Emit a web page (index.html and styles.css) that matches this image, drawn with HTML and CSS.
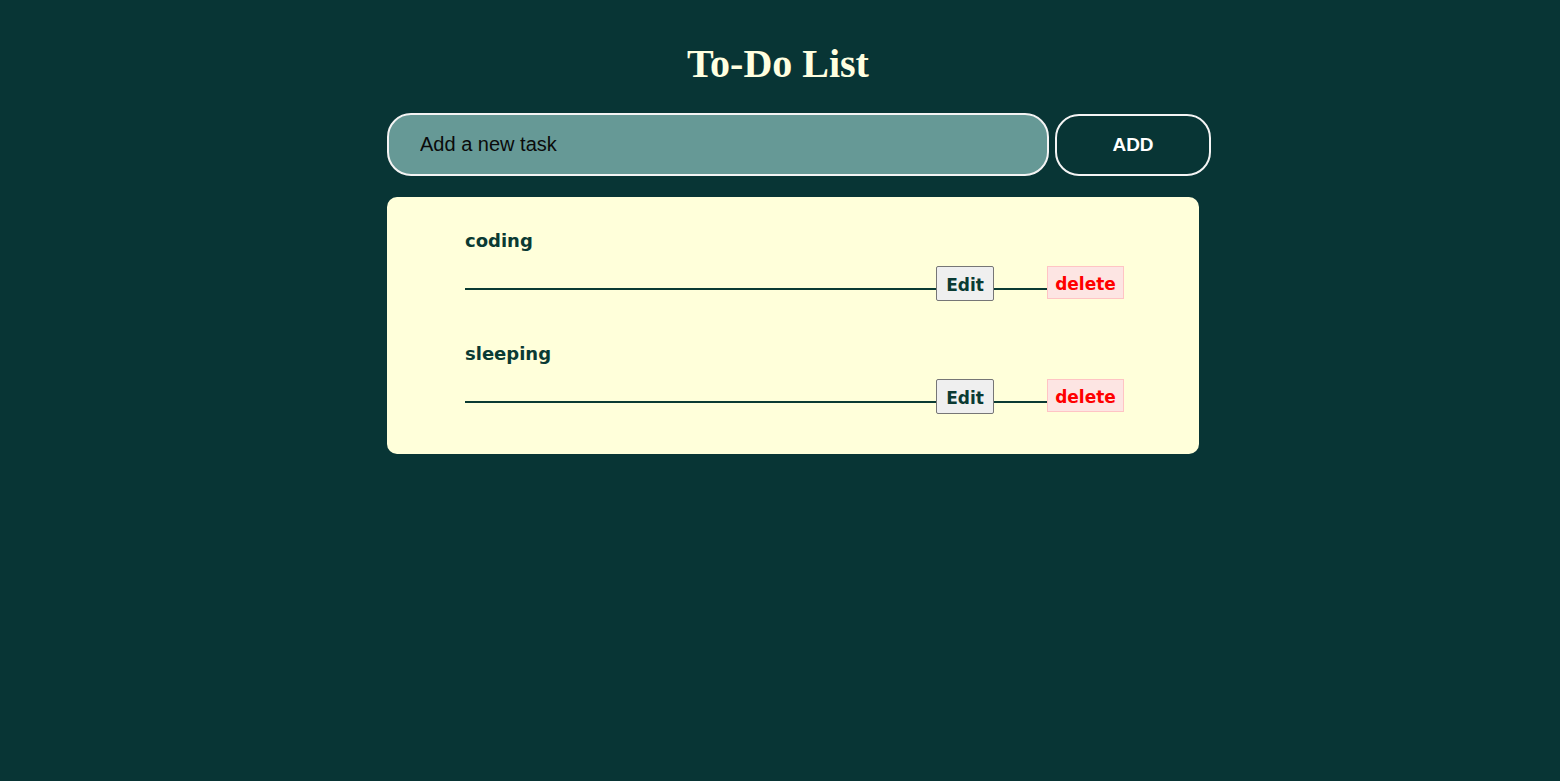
FILE: index.html
```html
<!DOCTYPE html>
<html lang="en">
<head>
<meta charset="utf-8">
<title>To-Do List</title>
<link rel="stylesheet" href="styles.css">
</head>
<body>
<div class="app">
  <h1 class="title">To-Do List</h1>
  <div class="main">
    <div class="entry">
      <input class="task-input" type="text" placeholder="Add a new task">
      <button class="add-btn">ADD</button>
    </div>
    <div class="card">
      <ul class="tasks">
        <li class="task">
          <span class="task-name">coding</span>
          <div class="task-row">
            <span class="rule rule-long"></span>
            <button class="edit-btn">Edit</button>
            <span class="rule rule-short"></span>
            <button class="delete-btn">delete</button>
          </div>
        </li>
        <li class="task">
          <span class="task-name">sleeping</span>
          <div class="task-row">
            <span class="rule rule-long"></span>
            <button class="edit-btn">Edit</button>
            <span class="rule rule-short"></span>
            <button class="delete-btn">delete</button>
          </div>
        </li>
      </ul>
    </div>
  </div>
</div>
</body>
</html>
```

FILE: styles.css
```css
* { box-sizing: border-box; }

html, body {
  margin: 0;
  padding: 0;
  background: #083535;
  height: 100%;
}

.app {
  padding-top: 41px;
}

.title {
  margin: 0 0 0 -4px;
  text-align: center;
  font-family: "Liberation Serif", "Times New Roman", serif;
  font-weight: bold;
  font-size: 40px;
  line-height: 46px;
  color: #ffffe0;
}

.main {
  margin-left: 387px;
  width: 824px;
  margin-top: 26px;
  display: flex;
  flex-direction: column;
  gap: 21px;
}

.entry {
  display: flex;
  align-items: flex-start;
  gap: 6px;
}

.task-input {
  width: 662px;
  height: 63px;
  border: 2px solid #f4f4f4;
  border-radius: 24px;
  background: #669996;
  padding: 0 0 0 31px;
  font-family: "Liberation Sans", Arial, sans-serif;
  font-size: 20px;
  color: #000;
  outline: none;
}

.task-input::placeholder {
  color: #0a0a0a;
  opacity: 1;
}

.add-btn {
  margin-top: 1px;
  width: 156px;
  height: 62px;
  border: 2px solid #f4f4f4;
  border-radius: 24px;
  background: transparent;
  color: #fff;
  font-family: "Liberation Sans", Arial, sans-serif;
  font-weight: bold;
  font-size: 19px;
}

.card {
  width: 812px;
  background: #ffffda;
  border-radius: 10px;
  padding: 30px 75px 40px 78px;
}

.tasks {
  list-style: none;
  margin: 0;
  padding: 0;
  display: flex;
  flex-direction: column;
  gap: 39px;
}

.task {
  display: flex;
  flex-direction: column;
  gap: 11px;
}

.task-name {
  font-family: "Comic Sans MS", "DejaVu Sans", sans-serif;
  font-weight: bold;
  font-size: 18px;
  line-height: 28px;
  color: #0a3a33;
}

.task-row {
  display: flex;
  align-items: flex-start;
  height: 35px;
}

.rule {
  height: 2px;
  margin-top: 22px;
  background: #0a3a33;
}

.rule-long { flex: 1; }
.rule-short { width: 53px; }

.edit-btn, .delete-btn {
  font-family: "Comic Sans MS", "DejaVu Sans", sans-serif;
  font-weight: bold;
  font-size: 17px;
  padding: 3px 0 0;
}

.edit-btn {
  width: 58px;
  height: 35px;
  background: #efefef;
  border: 1px solid #767676;
  border-radius: 2px;
  color: #0a3a33;
}

.delete-btn {
  width: 77px;
  height: 33px;
  background: #fde5e3;
  border: 1px solid #ffc4c4;
  border-radius: 0;
  color: #ff0000;
}
```
